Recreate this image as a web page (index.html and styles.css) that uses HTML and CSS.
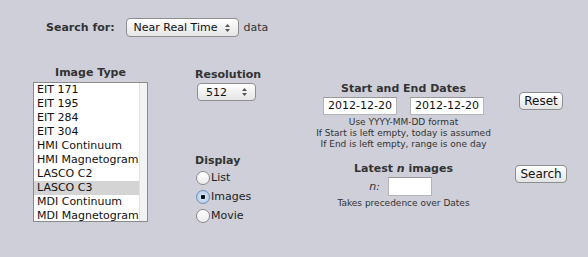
FILE: index.html
```html
<!DOCTYPE html>
<html>
<head>
<meta charset="utf-8">
<link rel="stylesheet" href="styles.css">
</head>
<body>
<div class="page">
  <div class="toprow">
    <span class="lbl">Search for:</span>
    <div class="sel sel-mode"><span class="sel-text">Near Real Time</span><svg class="arr" width="7" height="10" viewBox="0 0 7 10"><path d="M3.5 1 L6 4 L1 4 Z M3.5 9 L6 6 L1 6 Z" fill="#555"/></svg></div>
    <span class="data">data</span>
  </div>
  <div class="main">
    <div class="col1">
      <div class="lbl center">Image Type</div>
      <div class="listbox">
        <div class="items">
          <div class="item">EIT 171</div>
          <div class="item">EIT 195</div>
          <div class="item">EIT 284</div>
          <div class="item">EIT 304</div>
          <div class="item">HMI Continuum</div>
          <div class="item">HMI Magnetogram</div>
          <div class="item">LASCO C2</div>
          <div class="item selected">LASCO C3</div>
          <div class="item">MDI Continuum</div>
          <div class="item">MDI Magnetogram</div>
        </div>
        <div class="scroll"></div>
      </div>
    </div>
    <div class="col2">
      <div class="lbl res-lbl">Resolution</div>
      <div class="sel sel-res"><span class="sel-text">512</span><svg class="arr" width="7" height="10" viewBox="0 0 7 10"><path d="M3.5 1 L6 4 L1 4 Z M3.5 9 L6 6 L1 6 Z" fill="#555"/></svg></div>
      <div class="lbl disp-lbl">Display</div>
      <div class="radio"><span class="dot"></span>List</div>
      <div class="radio"><span class="dot on"></span>Images</div>
      <div class="radio"><span class="dot"></span>Movie</div>
    </div>
    <div class="col3">
      <div class="lbl center dates-lbl">Start and End Dates</div>
      <div class="dates">
        <div class="inp date">2012-12-20</div>
        <div class="inp date">2012-12-20</div>
      </div>
      <div class="help">
        <div>Use YYYY-MM-DD format</div>
        <div>If Start is left empty, today is assumed</div>
        <div>If End is left empty, range is one day</div>
      </div>
      <div class="lbl center latest-lbl">Latest <i>n</i> images</div>
      <div class="nrow"><i class="nlab">n:</i><div class="inp ninp"></div></div>
      <div class="help">Takes precedence over Dates</div>
    </div>
    <div class="col4">
      <div class="btn reset">Reset</div>
      <div class="btn search">Search</div>
    </div>
  </div>
</div>
</body>
</html>
```
FILE: styles.css
```css
html, body {
  margin: 0;
  padding: 0;
  background: #cecfd8;
}
body {
  font-family: "DejaVu Sans", Verdana, sans-serif;
  color: #222;
  width: 588px;
  height: 257px;
  overflow: hidden;
}
.page {
  padding-top: 18px;
}
.toprow {
  display: flex;
  align-items: center;
  height: 19px;
  padding-left: 46px;
}
.lbl {
  font-weight: bold;
  font-size: 11px;
  line-height: 14px;
  color: #333;
}
.center { text-align: center; }
.sel {
  display: flex;
  align-items: center;
  box-sizing: border-box;
  border: 1px solid #8e8e8e;
  border-radius: 4px;
  background: linear-gradient(#ffffff, #f1f1f1 50%, #e6e6e6);
  font-size: 11px;
  color: #111;
  white-space: nowrap;
}
.sel-mode {
  margin-left: 11px;
  width: 113px;
  height: 19px;
  padding-left: 7px;
}
.sel-text { flex: 1; }
.arr { margin-right: 7px; }
.data {
  margin-left: 5px;
  font-size: 11px;
  color: #333;
}
.main {
  display: flex;
  margin-top: 29px;
  padding-left: 33px;
}
.col1 { width: 115px; }
.listbox {
  margin-top: 2px;
  box-sizing: border-box;
  height: 140px;
  border: 1px solid #8a8a8a;
  background: #fff;
  display: flex;
  overflow: hidden;
}
.items { flex: 1; }
.item {
  height: 14px;
  line-height: 14px;
  font-size: 11px;
  padding-left: 3px;
  color: #111;
  white-space: nowrap;
}
.item.selected { background: #d4d4d4; }
.scroll {
  width: 10px;
  background: #f3f3f3;
  border-left: 1px solid #e2e2e2;
}
.col2 {
  margin-left: 47px;
  width: 128px;
}
.res-lbl { margin-top: 2px; }
.sel-res {
  margin-top: 1px;
  margin-left: 2px;
  width: 59px;
  height: 18px;
  padding-left: 8px;
}
.disp-lbl { margin-top: 53px; }
.radio {
  display: flex;
  align-items: center;
  height: 19px;
  font-size: 11px;
  color: #222;
}
.dot {
  box-sizing: border-box;
  width: 14px;
  height: 14px;
  border-radius: 50%;
  border: 1px solid #8a8a8a;
  background: linear-gradient(#ffffff, #ececec);
  margin-left: 1px;
  margin-right: 1px;
}
.dot.on {
  border-color: #6f8fb5;
  background: radial-gradient(circle, #111 0 2px, #cfe0f2 2.5px, #a9c5e6 100%);
}
.col3 {
  width: 161px;
  display: flex;
  flex-direction: column;
  align-items: center;
}
.dates-lbl { margin-top: 16px; }
.dates {
  display: flex;
  gap: 13px;
  margin-top: 1px;
}
.inp {
  box-sizing: border-box;
  background: #fff;
  border: 1px solid #b5b5b5;
  border-top-color: #999;
}
.date {
  width: 74px;
  height: 18px;
  line-height: 16px;
  font-size: 11px;
  text-align: center;
  color: #111;
}
.help {
  margin-top: 2px;
  font-size: 9px;
  line-height: 11px;
  text-align: center;
  color: #333;
  white-space: nowrap;
}
.latest-lbl { margin-top: 12px; }
.latest-lbl i { font-style: italic; }
.nrow {
  display: flex;
  align-items: center;
  margin-top: 1px;
  margin-left: -6px;
}
.nlab {
  font-size: 11px;
  color: #333;
  margin-right: 8px;
}
.ninp {
  width: 44px;
  height: 19px;
}
.col4 {
  margin-left: 27px;
  width: 60px;
  display: flex;
  flex-direction: column;
  align-items: center;
}
.btn {
  box-sizing: border-box;
  height: 18px;
  line-height: 16px;
  border: 1px solid #8e8e8e;
  border-radius: 4px;
  background: linear-gradient(#ffffff, #f2f2f2 50%, #e4e4e4);
  font-size: 12px;
  color: #111;
  text-align: center;
  padding: 0 4px;
}
.reset { margin-top: 26px; }
.search { margin-top: 55px; }
```
